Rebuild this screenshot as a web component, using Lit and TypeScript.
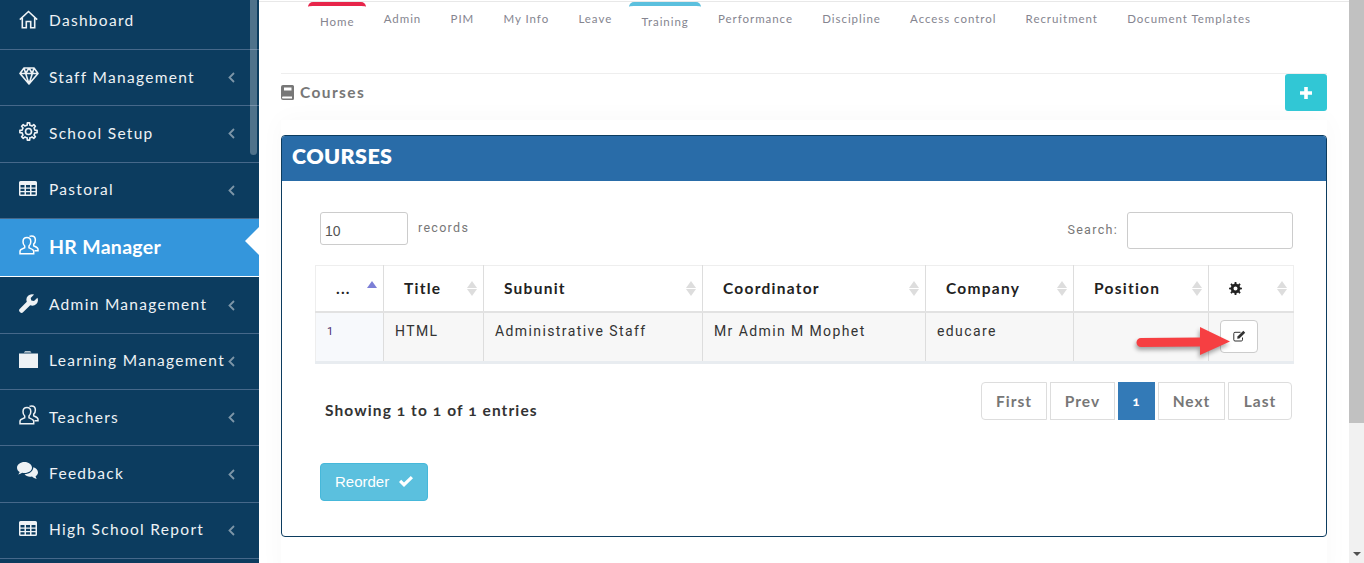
import { LitElement, html, css, svg } from "lit";
import { customElement } from "lit/decorators.js";

function gear(cx: number, cy: number, ro: number, ri: number, teeth: number) {
  let d = "";
  const step = (Math.PI * 2) / teeth;
  for (let i = 0; i < teeth; i++) {
    const a = i * step - Math.PI / 2;
    const pts = [
      [ri, a - step * 0.5],
      [ri, a - step * 0.27],
      [ro, a - step * 0.17],
      [ro, a + step * 0.17],
      [ri, a + step * 0.27],
    ];
    for (const [r, t] of pts) {
      d += `${d ? "L" : "M"}${(cx + r * Math.cos(t)).toFixed(2)} ${(cy + r * Math.sin(t)).toFixed(2)}`;
    }
  }
  return d + "Z";
}

const usersIcon = svg`<svg width="20" height="21" viewBox="0 0 20 21" fill="none" stroke="currentColor" stroke-width="1.5"><path d="M8 2.6c2.4 0 3.8 1.7 3.8 4.2 0 2-.9 3.4-1.8 4.2v1.8c2 .8 4.7 1.6 4.7 3.4v2.6H1v-2.6c0-1.8 2.6-2.6 4.7-3.4V11C4.800 10.200 4 8.800 4 6.800 4 4.300 5.600 2.600 8 2.600Z"/><path d="M10.500 1.300c.6-.3 1.300-.4 2-.4 2.400 0 3.900 1.700 3.900 4.100 0 2-.8 3.300-1.700 4.100v1.800c1.800.8 4.300 1.500 4.300 3.300v1.600h-3.500"/></svg>`;
const tableIcon = svg`<svg width="18" height="15" viewBox="0 0 18 15"><path fill="currentColor" fill-rule="evenodd" d="M1.500 0h15A1.500 1.500 0 0 1 18 1.500v12a1.500 1.500 0 0 1-1.500 1.500h-15A1.500 1.500 0 0 1 0 13.500v-12A1.500 1.500 0 0 1 1.500 0ZM1.500 4v2.500h4V4Zm5.500 0v2.500h4V4Zm5.500 0v2.500h4V4ZM1.500 7.700v2.300h4V7.700Zm5.500 0v2.300h4V7.700Zm5.500 0v2.300h4V7.700ZM1.500 11.200v2.300h4v-2.300Zm5.500 0v2.300h4v-2.300Zm5.500 0v2.300h4v-2.300Z"/></svg>`;

const icons: Record<string, unknown> = {
  home: svg`<svg width="19" height="19" viewBox="0 0 19 19" fill="none" stroke="currentColor" stroke-width="1.600"><path d="M.8 9.600 9.500 1.500l8.700 8.100M3.300 8v9.800h4V11.500h4.400v6.300h4V8"/></svg>`,
  gem: svg`<svg width="20" height="18" viewBox="0 0 20 18" fill="none" stroke="currentColor" stroke-width="1.600" stroke-linejoin="round"><path d="M5 1h10l4 5.500L10 17 1 6.500ZM1 6.500h18M6.700 6.500 10 17l3.300-10.500M5 1l1.700 5.500L10 1l3.300 5.500L15 1"/></svg>`,
  gear: svg`<svg width="19" height="19" viewBox="0 0 19 19" fill="none" stroke="currentColor" stroke-width="1.600" stroke-linejoin="round"><path d="${gear(9.5, 9.5, 8.700, 6.500, 8)}"/><circle cx="9.500" cy="9.500" r="3"/></svg>`,
  table: tableIcon,
  users: usersIcon,
  wrench: svg`<svg width="19" height="19" viewBox="0 0 19 19"><path fill="currentColor" d="M18.400 3.700 15 7.100l-2.700-.5-.6-2.700L15.100.6a5.600 5.600 0 0 0-7.300 7.200L.9 14.700a2.400 2.400 0 0 0 3.400 3.400l6.900-6.900a5.600 5.600 0 0 0 7.200-7.500Z"/></svg>`,
  folder: svg`<svg width="19" height="17" viewBox="0 0 19 17"><path fill="currentColor" d="M5 1.200 6.200.2h5l1.300 1.300H5ZM0 2.600h19V17H0Z"/></svg>`,
  comments: svg`<svg class="wide" width="22" height="19" viewBox="0 0 22 19"><path fill="currentColor" d="M7.500 0C3.400 0 0 2.500 0 5.700c0 1.800 1 3.300 2.700 4.400-.3.900-.8 1.700-1.500 2.400 1.500-.2 2.900-.8 4-1.700.7.100 1.500.2 2.300.2 4.100 0 7.500-2.500 7.500-5.300C15 2.500 11.600 0 7.500 0Z"/><path fill="currentColor" d="M16.300 5.300c.2 3.600-3.700 6.800-8.800 7 1.200 1.500 3.300 2.400 5.500 2.400.7 0 1.300-.1 2-.2.900.9 2.900 2.100 4.800 2.500-.6-.7-1-1.700-1.200-2.700 1.500-1 2.400-2.300 2.400-3.800 0-2.400-1.900-4.400-4.700-5.200Z"/></svg>`,
};

const menu = [
  { label: "Dashboard", icon: "home", chev: false },
  { label: "Staff Management", icon: "gem", chev: true },
  { label: "School Setup", icon: "gear", chev: true },
  { label: "Pastoral", icon: "table", chev: true },
  { label: "HR Manager", icon: "users", chev: false, active: true },
  { label: "Admin Management", icon: "wrench", chev: true },
  { label: "Learning Management", icon: "folder", chev: true },
  { label: "Teachers", icon: "users", chev: true },
  { label: "Feedback", icon: "comments", chev: true },
  { label: "High School Report", icon: "table", chev: true },
];

const tabs = ["Home", "Admin", "PIM", "My Info", "Leave", "Training", "Performance", "Discipline", "Access control", "Recruitment", "Document Templates"];
const heads = ["...", "Title", "Subunit", "Coordinator", "Company", "Position"];
const cells = ["HTML", "Administrative Staff", "Mr Admin M Mophet", "educare", ""];

@customElement("app-root")
export class AppRoot extends LitElement {
  static styles = css`
    :host { display: flex; width: 1364px; height: 563px; overflow: hidden; background: #fff; font-family: "Lato", "Open Sans", sans-serif; }
    * { box-sizing: border-box; }
    .side { position: relative; width: 259px; flex: none; background: #0c3c5f; overflow: hidden; }
    .menu { margin-top: -6.3px; }
    .row { height: 56.3px; display: flex; align-items: center; padding: 0 24px 2px 19px; color: #eef2f5; border-bottom: 1px solid #46688a; font-size: 15.5px; letter-spacing: 1.3px; white-space: nowrap; }
    .row.active { height: 58.6px; background: #3496dc; color: #fff; font-size: 19.5px; font-weight: 700; letter-spacing: .3px; border-bottom-color: #fff; position: relative; }
    .row.active::after { content: ""; position: absolute; right: 0; top: 8px; border: 14px solid transparent; border-left: 0; border-right-color: #fff; }
    .ic { width: 30px; flex: none; display: flex; margin-top: -2px; }
    .ic svg { display: block; }
    .ic svg.wide { margin: -2px 0 0 -2px; }
    .lab { flex: 1; }
    .chev { flex: none; display: flex; margin-top: 2px; }
    .thumb { position: absolute; top: 0; left: 250px; width: 7px; height: 155px; background: rgba(255,255,255,.28); border-radius: 0 0 4px 4px; }
    .main { flex: 1; min-width: 0; padding: 1px 22px 0; }
    .nav { display: flex; gap: 5.300px; padding-left: 49px; height: 72px; border-top: 1px solid #e8e8e8; margin: 0 -22px; align-items: flex-start; }
    .tab { padding: 8.500px 12px 0; font-size: 11.500px; line-height: 15px; letter-spacing: .95px; color: #85858f; white-space: nowrap; }
    .tab.on { padding-top: 7.500px; border-top: 4px solid #e7254a; border-radius: 5px 5px 0 0; }
    .tab.on.b { border-top-color: #5bc0de; }
    .head { display: flex; justify-content: space-between; align-items: flex-start; border-top: 1px solid #eee; }
    .title { display: flex; align-items: center; gap: 6px; height: 36px; color: #777; font-size: 15.500px; font-weight: 700; letter-spacing: 1.400px; }
    .add { width: 42px; height: 37px; background: #31c7d5; border-radius: 3px; display: flex; align-items: center; justify-content: center; }
    .card { margin-top: 9px; height: 460px; padding-top: 15px; background: #fff; box-shadow: 0 0 24px rgba(0,0,0,.03); }
    .panel { height: 402px; border: 1px solid #0c3c5f; border-radius: 4px; overflow: hidden; }
    .phead { height: 45px; background: #296ca8; color: #fff; font-size: 21.500px; font-weight: 800; letter-spacing: .4px; padding: 0 0 5px 10px; display: flex; align-items: center; }
    .pbody { padding: 31px 33px 0; }
    .tools { display: flex; justify-content: space-between; height: 37px; margin-bottom: 16px; font-family: "Roboto", sans-serif; font-size: 12.500px; letter-spacing: 1.300px; color: #777; }
    .left, .right { display: flex; }
    .left { margin-left: 5px; gap: 10px; }
    .right { gap: 9px; }
    .sel { width: 88px; height: 33px; border: 1px solid #ccc; border-radius: 3px; font: 14px "Liberation Sans", sans-serif; color: #555; letter-spacing: 0; padding: 8px 0 0 4px; line-height: 20px; }
    .lbl { line-height: 31px; }
    .right .lbl { line-height: 35px; }
    .srch { width: 166px; height: 37px; border: 1px solid #ccc; border-radius: 3px; }
    .tw { position: relative; }
    table { width: 978px; table-layout: fixed; border-collapse: collapse; border: 1px solid #eee; border-bottom: 0; }
    th { height: 46px; padding: 0 6px 0 20px; border-bottom: 2px solid #e2e2e2; border-left: 1px solid #ddd; font-size: 15.500px; font-weight: 700; letter-spacing: 1.250px; color: #222; text-align: left; }
    th:first-child, td:first-child { border-left: 0; }
    th > div { display: flex; justify-content: space-between; align-items: center; }
    td { height: 51px; vertical-align: top; padding: 9px 8px 0 11px; background: #f7f7f7; border-left: 1px solid #ddd; border-bottom: 3px solid #e8ecf0; font-family: "Roboto", sans-serif; font-size: 14px; line-height: 18px; letter-spacing: 1.400px; color: #333; white-space: nowrap; }
    td.n { background: #f7f9fc; color: #4a2f6f; font-size: 11px; padding: 10px 0 0 11px; }
    td.act { padding: 7px 0 0 11px; }
    .edit { width: 38px; height: 33px; background: #fff; border: 1px solid #ccc; border-radius: 4px; display: flex; align-items: center; justify-content: center; }
    .sort { display: flex; flex-direction: column; gap: 1px; flex: none; }
    .up, .dn { width: 0; height: 0; border: 5px solid transparent; }
    .up { border-top: 0; border-bottom: 7px solid #ddd; }
    .dn { border-bottom: 0; border-top: 7px solid #ddd; }
    .asc .up { border-bottom-color: #7c7fd6; }
    .asc .dn { visibility: hidden; }
    .arrow { position: absolute; left: 821px; top: 62px; filter: drop-shadow(-1px 3px 2px rgba(0,0,0,.35)); }
    .foot { display: flex; justify-content: space-between; margin-top: 18px; padding: 0 1px 0 10px; }
    .info { line-height: 56px; height: 38px; font-size: 15.500px; font-weight: 700; letter-spacing: 1.100px; color: #333; font-variant-numeric: oldstyle-nums; }
    .pg { display: grid; grid-template-columns: 66px 65px 37px 67px 64px; gap: 3px; height: 38px; }
    .pg span { border: 1px solid #ddd; display: flex; align-items: center; justify-content: center; font-size: 15.500px; font-weight: 700; letter-spacing: 1px; color: #777; }
    .pg span:first-child { border-radius: 4px 0 0 4px; }
    .pg span:last-child { border-radius: 0 4px 4px 0; }
    .pg .cur { background: #337ab7; border-color: #337ab7; color: #fff; font-size: 13px; font-weight: 900; font-variant-numeric: oldstyle-nums; }
    .reorder { margin: 43px 0 0 5px; width: 108px; height: 38px; background: #5bc0de; border: 1px solid #46b8da; border-radius: 4px; color: #fff; font: 15px "Liberation Sans", sans-serif; display: flex; align-items: center; gap: 10px; padding: 0 0 2px 14px; }
    .sb { width: 15px; flex: none; background: #f1f1f1; display: flex; flex-direction: column; align-items: center; justify-content: space-between; padding-bottom: 7px; }
    .sb i { display: block; width: 15px; height: 423px; background: #c1c1c1; }
    .sb b { width: 0; height: 0; border: 4px solid transparent; border-bottom: 0; border-top: 4px solid #505050; }
  `;

  render() {
    return html`
      <aside class="side">
        <div class="menu">
          ${menu.map((m) => html`
            <div class="row ${m.active ? "active" : ""}">
              <span class="ic">${icons[m.icon]}</span>
              <span class="lab">${m.label}</span>
              ${m.chev ? html`<span class="chev"><svg width="7" height="11" viewBox="0 0 7 11" fill="none" stroke="#7d96a8" stroke-width="1.800"><path d="M6 1 1.500 5.500 6 10"/></svg></span>` : ""}
            </div>`)}
        </div>
        <div class="thumb"></div>
      </aside>
      <main class="main">
        <nav class="nav">
          ${tabs.map((t) => html`<span class="tab ${t === "Home" ? "on" : t === "Training" ? "on b" : ""}">${t}</span>`)}
        </nav>
        <div class="head">
          <div class="title">
            <svg width="13" height="15" viewBox="0 0 13 15"><path fill="#777" fill-rule="evenodd" d="M2 0h9.500A1.500 1.500 0 0 1 13 1.500V13.500A1.500 1.500 0 0 1 11.500 15H2a2 2 0 0 1-2-2V2a2 2 0 0 1 2-2ZM3 2.500v3h7.500v-3ZM2 11.500a1 1 0 0 0 0 2h9v-2Z"/></svg>
            <span>Courses</span>
          </div>
          <span class="add"><svg width="12" height="12" viewBox="0 0 12 12"><path fill="#fff" d="M4.200 0h3.600v4.200H12v3.600H7.800V12H4.200V7.800H0V4.200h4.200Z"/></svg></span>
        </div>
        <section class="card">
          <div class="panel">
            <div class="phead">COURSES</div>
            <div class="pbody">
              <div class="tools">
                <div class="left"><span class="sel">10</span><span class="lbl">records</span></div>
                <div class="right"><span class="lbl">Search:</span><span class="srch"></span></div>
              </div>
              <div class="tw">
                <table>
                  <colgroup><col style="width:68px"/><col style="width:100px"/><col style="width:219px"/><col style="width:223px"/><col style="width:148px"/><col style="width:135px"/><col style="width:85px"/></colgroup>
                  <thead><tr>
                    ${heads.map((h, i) => html`<th><div><span>${h}</span><span class="sort ${i === 0 ? "asc" : ""}"><i class="up"></i><i class="dn"></i></span></div></th>`)}
                    <th><div><svg width="13" height="13" viewBox="0 0 13 13"><path fill="#222" fill-rule="evenodd" d="${gear(6.5, 6.5, 6.5, 4.8, 8)}M6.500 4.500a2 2 0 1 0 0 4 2 2 0 0 0 0-4Z"/></svg><span class="sort"><i class="up"></i><i class="dn"></i></span></div></th>
                  </tr></thead>
                  <tbody><tr>
                    <td class="n">1</td>
                    ${cells.map((c) => html`<td>${c}</td>`)}
                    <td class="act"><span class="edit"><svg width="13" height="12" viewBox="0 0 13 12" fill="none" stroke="#333" stroke-width="1"><path d="M9.500 7.500v2.300a1.200 1.200 0 0 1-1.200 1.200H2a1.200 1.200 0 0 1-1.200-1.200V3.500A1.200 1.200 0 0 1 2 2.300h5.500"/><path fill="#333" stroke="none" d="M4.500 6.500 10.300.8l1.900 1.900-5.800 5.700-2.200.3Z"/></svg></span></td>
                  </tr></tbody>
                </table>
                <svg class="arrow" width="94" height="28" viewBox="0 0 94 28"><path fill="#f63f42" d="M64 0 94 14.500 64 28V19.500L5 20a4.500 4.500 0 0 1 0-9L64 10.500Z"/></svg>
              </div>
              <div class="foot">
                <span class="info">Showing 1 to 1 of 1 entries</span>
                <div class="pg"><span>First</span><span>Prev</span><span class="cur">1</span><span>Next</span><span>Last</span></div>
              </div>
              <div class="reorder">Reorder <svg width="14" height="11" viewBox="0 0 14 11"><path fill="#fff" d="M5 11 0 6l2.200-2.200L5 6.600 11.800 0 14 2.200Z"/></svg></div>
            </div>
          </div>
        </section>
      </main>
      <div class="sb"><i></i><b></b></div>
    `;
  }
}
